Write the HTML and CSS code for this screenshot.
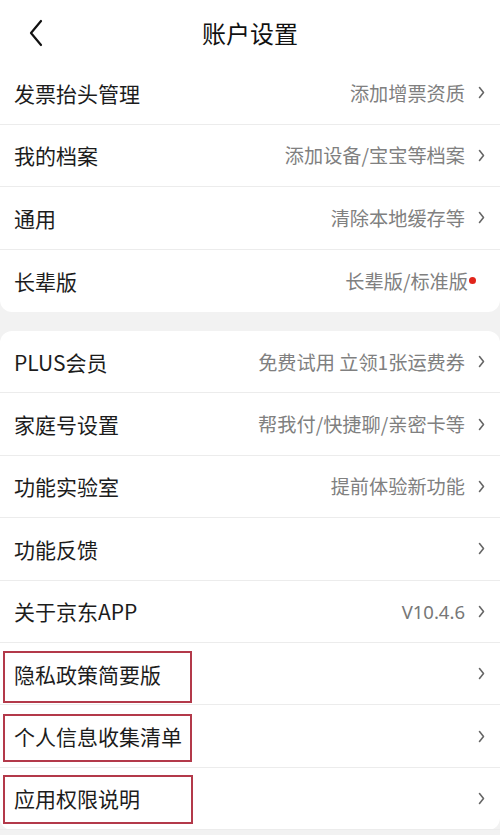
FILE: index.html
```html
<!DOCTYPE html>
<html lang="zh-CN">
<head>
<meta charset="utf-8">
<link rel="stylesheet" href="styles.css">
</head>
<body>
<div class="page">
  <div class="card card-top">
    <div class="header">
      <svg class="back" width="14" height="28" viewBox="0 0 14 28"><path d="M12 2 L2 14 L12 26" fill="none" stroke="#111" stroke-width="2.2" stroke-linecap="round" stroke-linejoin="round"/></svg>
      <div class="title">账户设置</div>
    </div>
    <div class="row"><span class="label">发票抬头管理</span><span class="value">添加增票资质</span><svg class="chev" viewBox="0 0 7 13"><path d="M1.5 1.5 L5.5 6.5 L1.5 11.5"/></svg></div>
    <div class="row"><span class="label">我的档案</span><span class="value">添加设备/宝宝等档案</span><svg class="chev" viewBox="0 0 7 13"><path d="M1.5 1.5 L5.5 6.5 L1.5 11.5"/></svg></div>
    <div class="row"><span class="label">通用</span><span class="value">清除本地缓存等</span><svg class="chev" viewBox="0 0 7 13"><path d="M1.5 1.5 L5.5 6.5 L1.5 11.5"/></svg></div>
    <div class="row row-last"><span class="label">长辈版</span><span class="value">长辈版/标准版</span><span class="dot"></span></div>
  </div>
  <div class="card card-bottom">
    <div class="row"><span class="label">PLUS会员</span><span class="value">免费试用 立领1张运费券</span><svg class="chev" viewBox="0 0 7 13"><path d="M1.5 1.5 L5.5 6.5 L1.5 11.5"/></svg></div>
    <div class="row"><span class="label">家庭号设置</span><span class="value">帮我付/快捷聊/亲密卡等</span><svg class="chev" viewBox="0 0 7 13"><path d="M1.5 1.5 L5.5 6.5 L1.5 11.5"/></svg></div>
    <div class="row"><span class="label">功能实验室</span><span class="value">提前体验新功能</span><svg class="chev" viewBox="0 0 7 13"><path d="M1.5 1.5 L5.5 6.5 L1.5 11.5"/></svg></div>
    <div class="row"><span class="label">功能反馈</span><span class="value"></span><svg class="chev" viewBox="0 0 7 13"><path d="M1.5 1.5 L5.5 6.5 L1.5 11.5"/></svg></div>
    <div class="row"><span class="label">关于京东APP</span><span class="value latin">V10.4.6</span><svg class="chev" viewBox="0 0 7 13"><path d="M1.5 1.5 L5.5 6.5 L1.5 11.5"/></svg></div>
    <div class="row"><span class="label">隐私政策简要版</span><span class="value"></span><svg class="chev" viewBox="0 0 7 13"><path d="M1.5 1.5 L5.5 6.5 L1.5 11.5"/></svg><span class="mark mark-1"></span></div>
    <div class="row"><span class="label">个人信息收集清单</span><span class="value"></span><svg class="chev" viewBox="0 0 7 13"><path d="M1.5 1.5 L5.5 6.5 L1.5 11.5"/></svg><span class="mark mark-2"></span></div>
    <div class="row"><span class="label">应用权限说明</span><span class="value"></span><svg class="chev" viewBox="0 0 7 13"><path d="M1.5 1.5 L5.5 6.5 L1.5 11.5"/></svg><span class="mark mark-3"></span></div>
  </div>
</div>
</body>
</html>
```
FILE: styles.css
```css
html, body {
  margin: 0;
  padding: 0;
  background: #f2f2f2;
}
body {
  font-family: "Noto Sans CJK SC", "Noto Sans", sans-serif;
  width: 500px;
  height: 835px;
  overflow: hidden;
}
.page {
  display: flex;
  flex-direction: column;
  gap: 19px;
}
.card {
  background: #fff;
  border-radius: 12px;
}
.card-top {
  border-radius: 0 0 12px 12px;
}
.header {
  height: 62px;
  display: flex;
  align-items: center;
  justify-content: center;
  position: relative;
}
.back {
  position: absolute;
  left: 29px;
  top: 19px;
}
.title {
  font-size: 24px;
  color: #111;
  line-height: 1;
  margin-top: 4px;
}
.row {
  position: relative;
  box-sizing: border-box;
  height: 62.4px;
  display: flex;
  align-items: center;
  padding: 0 15px 0 14px;
  border-bottom: 1px solid #ececec;
}
.card-top .row {
  height: 62.5px;
}
.row-last {
  border-bottom: none;
}
.label {
  font-size: 21px;
  color: #1c1c1c;
  flex: 1;
  white-space: nowrap;
}
.value {
  font-size: 19.2px;
  color: #808080;
  white-space: nowrap;
  margin-right: 13px;
}
.latin {
  font-family: "Noto Sans", sans-serif;
  font-size: 18.5px;
  color: #777;
}
.chev {
  width: 7px;
  height: 13px;
  fill: none;
  stroke: #666;
  stroke-width: 1.6;
  stroke-linecap: round;
  stroke-linejoin: round;
}
.dot {
  width: 7px;
  height: 7px;
  border-radius: 50%;
  background: #e1251b;
  margin-left: -12px;
  margin-right: 9px;
}
.mark {
  position: absolute;
  left: 3px;
  border: 2px solid #b3394a;
  box-sizing: border-box;
}
.mark-1 {
  top: 8px;
  width: 189px;
  height: 52px;
}
.mark-2 {
  top: 9px;
  width: 189px;
  height: 48px;
}
.mark-3 {
  top: 7px;
  width: 190px;
  height: 49px;
}
```
